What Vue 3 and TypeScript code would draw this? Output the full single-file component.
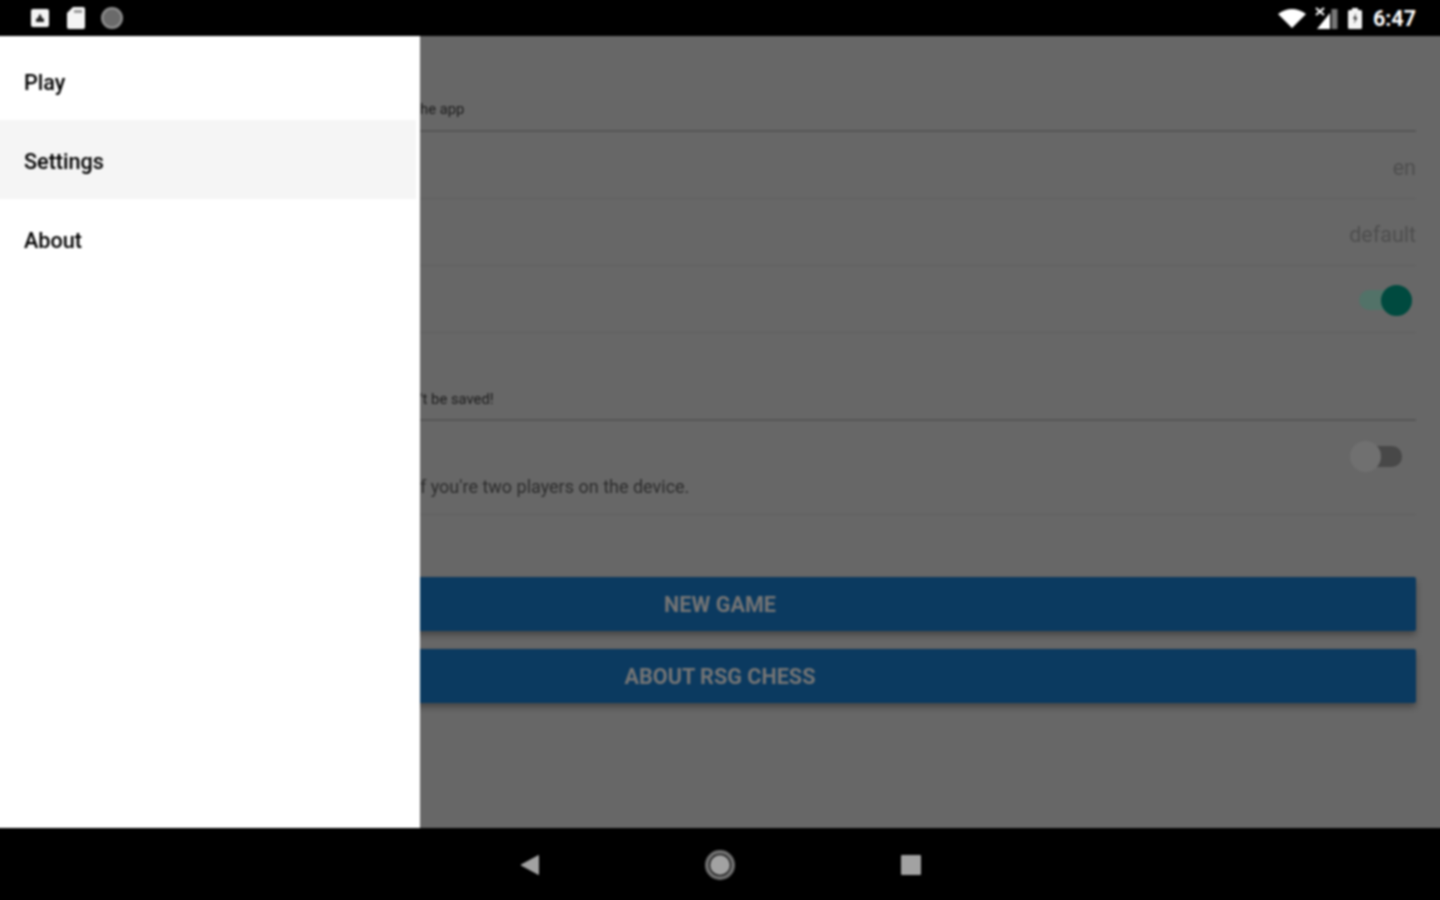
<script setup lang="ts">
const menu: { label: string; active?: boolean }[] = [
  { label: 'Play' },
  { label: 'Settings', active: true },
  { label: 'About' },
]
</script>

<template>
  <div class="screen">
    <header class="status">
      <div class="status-left">
        <svg width="18" height="18" viewBox="0 0 18 18"><rect width="18" height="18" rx="2" fill="#f4f4f4"/><path d="M9 4.500 11.500 9.500H13V13H5V9.500H6.500Z" fill="#222"/></svg>
        <svg width="18" height="22" viewBox="0 0 18 22"><path d="M6 0H16a2 2 0 0 1 2 2V20a2 2 0 0 1-2 2H2a2 2 0 0 1-2-2V6Z" fill="#f4f4f4"/><rect x="7" y="3" width="8" height="3" fill="#999"/></svg>
        <svg width="24" height="24" viewBox="0 0 24 24"><circle cx="12" cy="12" r="11" fill="#8c8c8c"/><circle cx="12" cy="12" r="8.500" fill="#6a6a6a"/></svg>
      </div>
      <div class="status-right">
        <svg width="28" height="19" viewBox="0 0 28 19"><path d="M0 5Q14-5 28 5L14 19Z" fill="#fff"/></svg>
        <svg class="signal" width="23" height="22" viewBox="0 0 23 22"><path d="M15 22V6L2 22Z" fill="#fff"/><path d="M16.500 22V2H22.500V22Z" fill="#777"/><path d="M1 1 9 8M9 1 1 8" stroke="#fff" stroke-width="2"/></svg>
        <svg class="battery" width="14" height="21" viewBox="0 0 14 21"><path d="M4 0H10V2H12.500a1.500 1.500 0 0 1 1.500 1.500V19.500a1.500 1.500 0 0 1-1.500 1.500H1.500a1.500 1.500 0 0 1-1.500-1.500V3.500a1.500 1.500 0 0 1 1.500-1.500H4Z" fill="#f4f4f4"/><path d="M8 5 5 11H7L6 16 9.500 9.500H7.500Z" fill="#333"/></svg>
        <span class="time">6:47</span>
      </div>
    </header>

    <main class="main">
      <section class="settings">
        <div class="head head-first"><span class="sub">he app</span></div>
        <div class="row"><span class="value">en</span></div>
        <div class="row"><span class="value">default</span></div>
        <div class="row">
          <span class="switch switch-on"><i></i></span>
        </div>
        <div class="head head-second"><span class="sub">'t be saved!</span></div>
        <div class="row row-tall">
          <span class="switch switch-off"><i></i></span>
          <span class="desc">f you're two players on the device.</span>
        </div>
        <div class="actions">
          <button class="action">New game</button>
          <button class="action">About RSG Chess</button>
        </div>
      </section>

      <nav class="drawer">
        <a v-for="item in menu" :key="item.label" class="item" :class="{ active: item.active }">{{ item.label }}</a>
      </nav>
    </main>

    <footer class="nav">
      <span class="nav-slot"><svg width="20" height="22" viewBox="0 0 20 22"><path d="M1 11 18.500 1.500V20.500Z" fill="#a2a2a2" stroke="#a2a2a2" stroke-linejoin="round"/></svg></span>
      <span class="nav-slot"><svg width="32" height="32" viewBox="0 0 32 32"><circle cx="16" cy="16" r="13" fill="none" stroke="#6f6f6f" stroke-width="4"/><circle cx="16" cy="16" r="10" fill="#a2a2a2"/></svg></span>
      <span class="nav-slot nav-slot-last"><svg width="20" height="20" viewBox="0 0 20 20"><rect width="20" height="20" rx="1" fill="#a2a2a2"/></svg></span>
    </footer>
  </div>
</template>

<style>
html, body { margin: 0; background: #000; overflow: hidden; }
</style>

<style scoped>
.screen {
  width: 1440px;
  height: 900px;
  display: flex;
  flex-direction: column;
  background: #000;
  font-family: Roboto, "Liberation Sans", sans-serif;
  filter: blur(0.9px);
}
.status {
  height: 36px;
  flex: none;
  display: flex;
  align-items: center;
  justify-content: space-between;
  padding: 0 24px 0 31px;
}
.status-left, .status-right { display: flex; align-items: center; }
.status-left { gap: 18px; }
.status-left svg:last-child { margin-left: -3px; }
.status-right svg:first-child { margin-right: 9px; }
.signal { margin-right: 11px; }
.battery { margin-right: 11px; margin-left: -1px; }
.time { color: #fff; font-size: 21.500px; font-weight: 700; }

.main {
  position: relative;
  flex: 1;
  min-height: 0;
  background: #676767;
  box-shadow: 4px 0 0 #676767;
}
.settings { display: flex; flex-direction: column; padding: 0 24px; height: 100%; box-sizing: border-box; }
.head {
  display: flex;
  align-items: flex-end;
  padding-left: 396px;
  border-bottom: 2px solid #565656;
  box-sizing: border-box;
}
.head-first { height: 96px; padding-bottom: 13px; }
.head-second { height: 88px; padding-bottom: 12px; }
.sub { color: #1c1c1c; font-size: 14.800px; line-height: 16px; }
.row {
  height: 67px;
  padding-top: 4px;
  display: flex;
  align-items: center;
  justify-content: flex-end;
  border-bottom: 1px solid #5f5f5f;
  box-sizing: border-box;
  position: relative;
}
.row-tall { height: 94px; padding-top: 0; }
.value { color: #4e4e4e; font-size: 21.500px; }
.desc { position: absolute; left: 396px; top: 54px; color: #2c2c2c; font-size: 18px; line-height: 24px; width: 600px; }
.switch { position: relative; display: block; border-radius: 10px; }
.switch i { position: absolute; display: block; width: 31px; height: 31px; border-radius: 50%; }
.switch-on { width: 42px; height: 20px; background: #527268; margin: -2px 15px 0 0; }
.switch-on i { left: 22px; top: -5.500px; background: #004a3f; }
.switch-off {
  position: absolute;
  left: 1342px;
  top: 25px;
  width: 36px;
  height: 21px;
  background: #484848;
}
.switch-off i { left: -16px; top: -5px; background: #707070; }

.actions { display: flex; flex-direction: column; gap: 18px; margin-top: 62px; }
.action {
  height: 54px;
  border: 0;
  border-radius: 2px;
  padding: 0;
  background: #0b3a60;
  color: #757575;
  font: 700 21.600px Roboto, "Liberation Sans", sans-serif;
  text-transform: uppercase;
  box-shadow: 0 4px 6px rgba(0, 0, 0, 0.32);
}

.drawer {
  position: absolute;
  inset: 0 auto 0 0;
  width: 420px;
  background: #fff;
  padding-top: 5px;
  box-sizing: border-box;
  display: flex;
  flex-direction: column;
  box-shadow: -4px 0 0 #fff;
}
.item {
  height: 79px;
  box-sizing: border-box;
  margin-right: 4px;
  display: flex;
  align-items: center;
  padding: 3px 0 0 24px;
  color: #000;
  font-size: 21.600px;
  font-weight: 500;
}
.item.active { background: #f5f5f5; box-shadow: -4px 0 0 #f5f5f5; }

.nav {
  height: 72px;
  flex: none;
  display: flex;
  justify-content: center;
  align-items: center;
  gap: 150px;
  padding-top: 1px;
  box-sizing: border-box;
}
.nav-slot { width: 40px; display: flex; justify-content: center; }
.nav-slot-last { margin-left: 1px; }
</style>
